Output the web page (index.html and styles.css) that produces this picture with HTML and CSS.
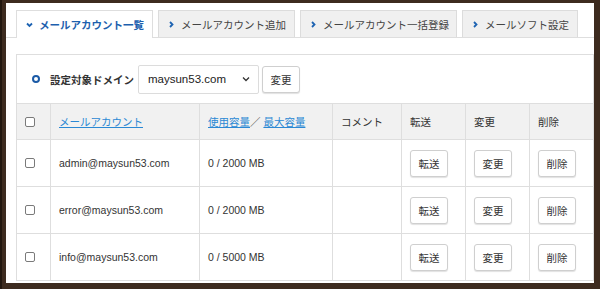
FILE: index.html
```html
<!DOCTYPE html>
<html lang="ja">
<head>
<meta charset="utf-8">
<link rel="stylesheet" href="styles.css">
</head>
<body>
<div class="frame">
  <nav class="tabs">
    <div class="tab tab-active"><svg class="chev" width="7" height="6" viewBox="0 0 7 6"><polyline points="1,1.5 3.5,4 6,1.5" fill="none" stroke="#1d63b2" stroke-width="1.8"/></svg><span>メールアカウント一覧</span></div>
    <div class="tab tab-w1"><svg class="chev" width="7" height="7" viewBox="0 0 7 7"><polyline points="2,1 4.5,3.5 2,6" fill="none" stroke="#1d63b2" stroke-width="1.8"/></svg><span>メールアカウント追加</span></div>
    <div class="tab tab-w2"><svg class="chev" width="7" height="7" viewBox="0 0 7 7"><polyline points="2,1 4.5,3.5 2,6" fill="none" stroke="#1d63b2" stroke-width="1.8"/></svg><span>メールアカウント一括登録</span></div>
    <div class="tab tab-w3"><svg class="chev" width="7" height="7" viewBox="0 0 7 7"><polyline points="2,1 4.5,3.5 2,6" fill="none" stroke="#1d63b2" stroke-width="1.8"/></svg><span>メールソフト設定</span></div>
  </nav>
  <section class="panel">
    <div class="domain-row">
      <span class="ring"></span>
      <span class="domain-label">設定対象ドメイン</span>
      <div class="select"><span>maysun53.com</span><svg width="8" height="6" viewBox="0 0 8 6"><polyline points="1,1.5 4,4.5 7,1.5" fill="none" stroke="#333" stroke-width="1.3"/></svg></div>
      <button class="btn">変更</button>
    </div>
    <table class="accounts">
      <colgroup>
        <col class="c-cb"><col class="c-mail"><col class="c-use"><col class="c-com"><col class="c-act"><col class="c-act"><col class="c-act">
      </colgroup>
      <thead>
        <tr>
          <th><span class="cb"></span></th>
          <th><a class="lnk">メールアカウント</a></th>
          <th><a class="lnk">使用容量</a>／ <a class="lnk">最大容量</a></th>
          <th>コメント</th>
          <th>転送</th>
          <th>変更</th>
          <th>削除</th>
        </tr>
      </thead>
      <tbody>
        <tr>
          <td><span class="cb"></span></td>
          <td>admin@maysun53.com</td>
          <td>0 / 2000 MB</td>
          <td></td>
          <td><button class="btn">転送</button></td>
          <td><button class="btn">変更</button></td>
          <td><button class="btn">削除</button></td>
        </tr>
        <tr>
          <td><span class="cb"></span></td>
          <td>error@maysun53.com</td>
          <td>0 / 2000 MB</td>
          <td></td>
          <td><button class="btn">転送</button></td>
          <td><button class="btn">変更</button></td>
          <td><button class="btn">削除</button></td>
        </tr>
        <tr>
          <td><span class="cb"></span></td>
          <td>info@maysun53.com</td>
          <td>0 / 5000 MB</td>
          <td></td>
          <td><button class="btn">転送</button></td>
          <td><button class="btn">変更</button></td>
          <td><button class="btn">削除</button></td>
        </tr>
      </tbody>
    </table>
  </section>
</div>
</body>
</html>
```

FILE: styles.css
```css
* { box-sizing: border-box; }
html, body { margin: 0; padding: 0; }
body {
  background: #3d2b1f;
  border-left: 2px solid #22170f;
  height: 289px;
  overflow: hidden;
  font-family: "Liberation Sans", "Noto Sans CJK JP", sans-serif;
  font-size: 10.5px;
  color: #333;
}
.frame {
  margin: 3px 6px 0 4px;
  height: 280px;
  background: #fff;
  padding-top: 7px;
}
.tabs {
  display: flex;
  gap: 5px;
  padding-left: 10px;
  height: 28px;
  border-bottom: 1px solid #dedede;
}
.tab {
  display: flex;
  align-items: center;
  gap: 6px;
  width: 137px;
  height: 27px;
  padding-left: 9px;
  background: #f0f0f0;
  border: 1px solid #dcdcdc;
  border-bottom: none;
  color: #444;
  white-space: nowrap;
}
.tab-active {
  background: #fff;
  height: 28px;
  color: #1d5fae;
  font-weight: bold;
  border-color: #dedede;
}
.tab-w2 { width: 157px; }
.tab-w3 { width: 116px; }
.chev { flex: none; }
.panel {
  margin: 16px 0 0 10px;
}
.domain-row {
  display: flex;
  align-items: center;
  height: 49px;
  padding-left: 15px;
  border: 1px solid #dedede;
  border-bottom: none;
}
.ring {
  width: 8px;
  height: 8px;
  border: 2px solid #1b5aa6;
  border-radius: 50%;
  margin-right: 10px;
}
.domain-label {
  font-weight: bold;
  margin-right: 4px;
  white-space: nowrap;
}
.select {
  display: flex;
  align-items: center;
  justify-content: space-between;
  width: 121px;
  height: 29px;
  padding: 0 8px 0 9px;
  border: 1px solid #dcdcdc;
  border-radius: 2px;
  font-size: 11.5px;
  color: #222;
  margin-right: 3px;
}
.btn {
  width: 38px;
  height: 27px;
  padding: 0;
  background: #fff;
  border: 1px solid #cfcfcf;
  border-radius: 3px;
  box-shadow: 0 1px 1px rgba(0,0,0,0.12);
  font-family: inherit;
  font-size: 10.5px;
  color: #333;
}
.accounts {
  width: 578px;
  table-layout: fixed;
  border-collapse: separate;
  border-spacing: 0;
}
.c-cb { width: 35px; }
.c-mail { width: 149px; }
.c-use { width: 133px; }
.c-com { width: 69px; }
.c-act { width: 64px; }
.accounts th, .accounts td {
  border-right: 1px solid #dedede;
  border-bottom: 1px solid #dedede;
  padding: 0 0 0 8px;
  text-align: left;
  font-weight: normal;
  white-space: nowrap;
}
.accounts th:first-child, .accounts td:first-child {
  border-left: 1px solid #dedede;
}
.accounts th {
  height: 37px;
  background: #f1f1f1;
  border-top: 1px solid #dedede;
}
.accounts td { height: 47px; }
.cb {
  display: block;
  width: 10px;
  height: 10px;
  border: 1px solid #7a7a7a;
  border-radius: 2px;
  background: #fff;
}
.lnk {
  color: #2a88d4;
  text-decoration: underline;
}
```
